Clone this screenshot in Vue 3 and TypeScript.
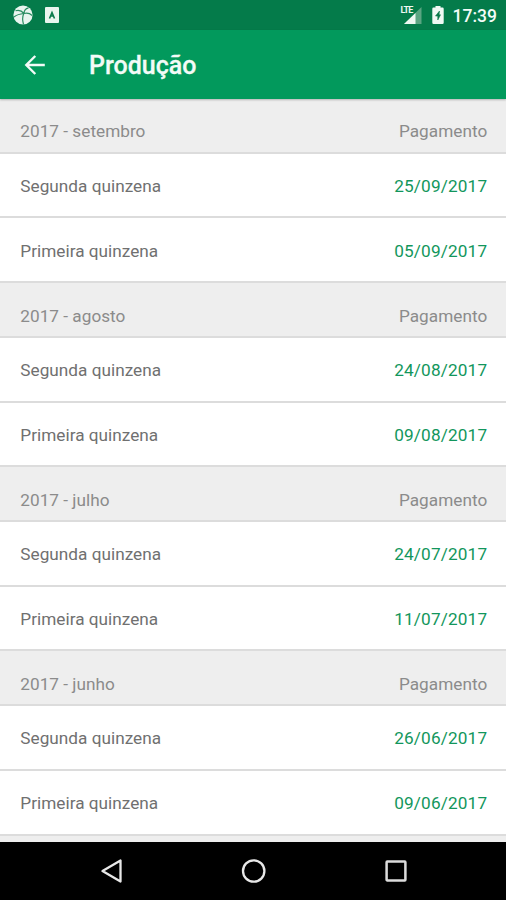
<script setup lang="ts">
interface Payment {
  label: string
  date: string
}
interface Month {
  title: string
  payments: Payment[]
}

const month = (title: string, second: string, first: string): Month => ({
  title,
  payments: [
    { label: 'Segunda quinzena', date: second },
    { label: 'Primeira quinzena', date: first },
  ],
})

const months: Month[] = [
  month('2017 - setembro', '25/09/2017', '05/09/2017'),
  month('2017 - agosto', '24/08/2017', '09/08/2017'),
  month('2017 - julho', '24/07/2017', '11/07/2017'),
  month('2017 - junho', '26/06/2017', '09/06/2017'),
]
</script>

<template>
  <div class="screen">
    <header class="status">
      <svg class="globe" width="20" height="20" viewBox="0 0 20 20">
        <circle cx="10" cy="10" r="9.6" fill="#e9f5ef" />
        <path d="M11 8.500C8.500 5.500 5.500 4.800 2.500 5.800M11 8.500C11 5.500 12.500 3.500 15.500 2.800M11 8.500C14 7.800 17 8.500 19.200 10.500M11 8.500C7 8.800 4 9.500 1 12M10.800 8.500C9.200 12 9.500 16 10.500 19.500" fill="none" stroke="#2b8d62" stroke-width="1.2" />
      </svg>
      <svg class="badge" width="14" height="16" viewBox="0 0 14 16">
        <rect width="14" height="16" rx="1" fill="#e9f5ef" />
        <path d="M4.500 11.500L7 5.500L9.500 11.500M5.500 9H8.500" fill="none" stroke="#08794a" stroke-width="1.6" />
      </svg>
      <span class="spacer"></span>
      <span class="signal">
        <svg width="22" height="20" viewBox="0 0 22 20">
          <path d="M21.500 2V19H4Z" fill="#5aa582" />
          <path d="M15.500 8V19H4Z" fill="#eef8f2" />
        </svg>
        <span class="lte">LTE</span>
      </span>
      <svg class="battery" width="12" height="18" viewBox="0 0 12 18">
        <path d="M3.500 0H8.500V1.500H10.500Q11.700 1.500 11.700 2.700V16.800Q11.700 18 10.500 18H1.500Q.3 18 .3 16.800V2.700Q.3 1.500 1.500 1.500H3.500Z" fill="#f0f9f4" />
        <path d="M7.500 5L3.500 10H5.800V14L8.500 8.800H7Z" fill="#08794a" stroke="#08794a" stroke-width=".6" />
      </svg>
      <span class="clock">17:39</span>
    </header>

    <div class="toolbar">
      <svg class="back" width="22" height="22" viewBox="0 0 22 22">
        <path d="M20.800 11H2.500M11.300 2L2.300 11L11.300 20" fill="none" stroke="#f3fbf7" stroke-width="2.400" />
      </svg>
      <h1>Produção</h1>
    </div>

    <main class="list">
      <section v-for="m in months" :key="m.title">
        <div class="row head">
          <span>{{ m.title }}</span>
          <span class="paid">Pagamento</span>
        </div>
        <div v-for="p in m.payments" :key="p.date" class="row">
          <span>{{ p.label }}</span>
          <span class="date">{{ p.date }}</span>
        </div>
      </section>
      <div class="next"></div>
    </main>

    <nav class="nav">
      <svg width="24" height="26" viewBox="0 0 24 26">
        <path d="M20.500 2.500V23.500L2.500 13Z" fill="none" stroke="#e8e8e8" stroke-width="2.300" stroke-linejoin="round" />
      </svg>
      <svg width="26" height="26" viewBox="0 0 26 26">
        <circle cx="12.700" cy="13" r="10.700" fill="none" stroke="#e8e8e8" stroke-width="2.300" />
      </svg>
      <svg width="24" height="26" viewBox="0 0 24 26">
        <rect x="2.600" y="3.600" width="18.800" height="18.800" rx=".6" fill="none" stroke="#dcdcdc" stroke-width="2.500" />
      </svg>
    </nav>
  </div>
</template>

<style>
body {
  background: #000;
}
</style>

<style scoped>
.screen {
  width: 506px;
  height: 900px;
  display: flex;
  flex-direction: column;
  overflow: hidden;
  background: #fff;
  font-family: Roboto, "Liberation Sans", sans-serif;
}
.status {
  height: 30px;
  flex: none;
  box-sizing: border-box;
  display: flex;
  align-items: center;
  padding: 0 9px 0 13px;
  background: #047b4a;
}
.badge {
  margin-left: 12px;
}
.spacer {
  flex: 1;
}
.signal {
  position: relative;
  display: flex;
  margin-right: 10px;
}
.lte {
  position: absolute;
  left: 1px;
  top: 1px;
  font-size: 9px;
  line-height: 8px;
  font-weight: 700;
  letter-spacing: -0.9px;
  color: #eef8f2;
}
.clock {
  margin-left: 9px;
  padding-top: 2px;
  font-size: 17.500px;
  font-weight: 500;
  line-height: 22px;
  color: #f3fbf7;
}
.toolbar {
  position: relative;
  z-index: 1;
  height: 69px;
  flex: none;
  display: flex;
  align-items: center;
  background: #02995c;
  box-shadow: 0 1px 2px rgba(0, 0, 0, 0.25);
}
.back {
  margin-left: 24px;
}
h1 {
  margin: 3px 0 0 43px;
  font-size: 25px;
  font-weight: 500;
  line-height: 30px;
  color: #f3fbf7;
  -webkit-text-stroke: 0.3px #f3fbf7;
}
.list {
  flex: 1;
  min-height: 0;
  overflow: hidden;
}
.row {
  height: 64.700px;
  box-sizing: border-box;
  display: flex;
  align-items: center;
  justify-content: space-between;
  padding: 2px 18.800px 0 20.300px;
  border-bottom: 2px solid #dcdcdc;
  font-size: 17.200px;
  letter-spacing: 0.02px;
  color: #707070;
  background: #fff;
}
.head {
  height: 54.750px;
  padding-top: 12px;
  background: #eee;
  color: #8b8b8b;
}
.date {
  letter-spacing: 0.15px;
  color: #12965c;
}
.next {
  height: 10px;
  background: #eee;
}
.nav {
  height: 58px;
  flex: none;
  box-sizing: border-box;
  display: flex;
  justify-content: space-between;
  align-items: center;
  padding: 0 98px 0 100px;
  background: #000;
}
</style>
